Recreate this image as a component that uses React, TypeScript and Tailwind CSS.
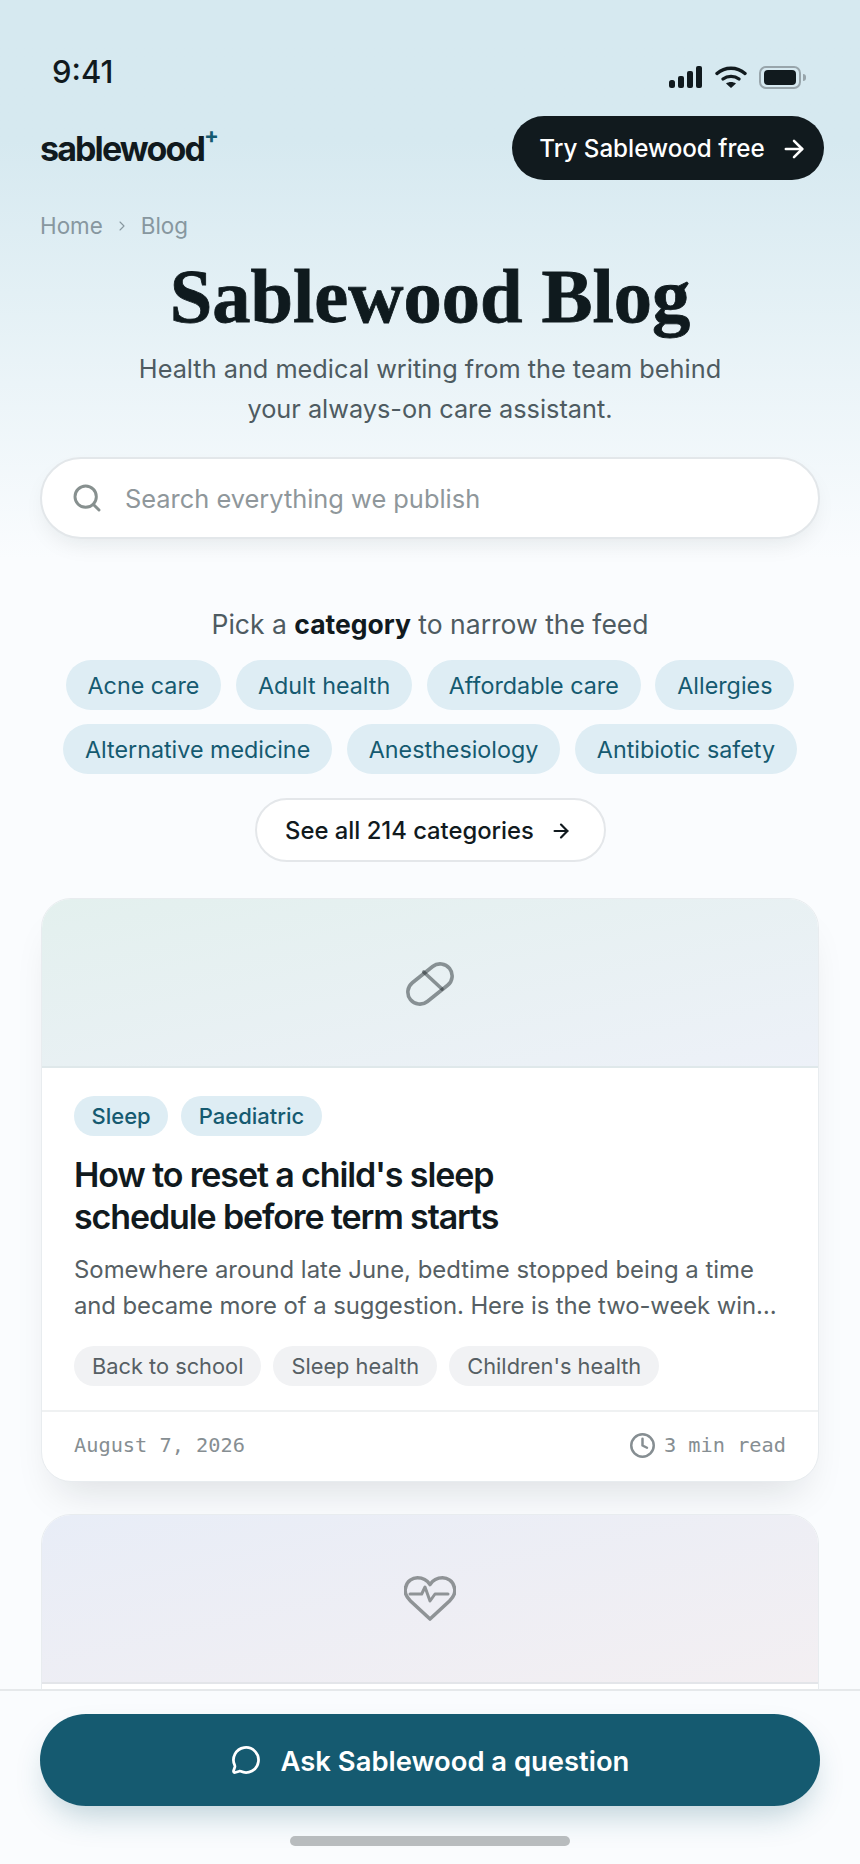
import React from 'react';
import { ArrowRight, ChevronRight, Clock, MessageCircle, Search } from 'lucide-react';

const categories = [
  ['Acne care', 'Adult health', 'Affordable care', 'Allergies'],
  ['Alternative medicine', 'Anesthesiology', 'Antibiotic safety'],
];

const StatusIcons = () => (
  <div className="flex items-center gap-[12px]">
    <svg width="34" height="22" viewBox="0 0 34 22" fill="#111a1e">
      <rect x="0" y="14" width="6" height="8" rx="2.5" />
      <rect x="9" y="10" width="6" height="12" rx="2" />
      <rect x="18" y="5" width="6" height="17" rx="2" />
      <rect x="27" y="0" width="6" height="22" rx="2" />
    </svg>
    <svg width="32" height="22" viewBox="0 0 32 22" fill="none" stroke="#111a1e" strokeWidth="3.4" strokeLinecap="round">
      <path d="M2 7.5C10 0.5 22 0.5 30 7.5" />
      <path d="M8 13C12.5 9.5 19.5 9.5 24 13" />
      <path d="M16 22l-5-4.6c3-2 7-2 10 0z" fill="#111a1e" stroke="none" />
    </svg>
    <div className="flex items-center gap-[2px]">
      <div className="flex h-[23px] w-[42px] items-center justify-center rounded-[7px] border-2 border-[#98a5ab]">
        <div className="h-[15px] w-[32px] rounded-[4px] bg-[#111a1e]" />
      </div>
      <div className="h-[7px] w-[3px] rounded-r-full bg-[#98a5ab]" />
    </div>
  </div>
);

// pill and heart are a bit wider than tall in the picture, so drawn by hand
const PillIcon = () => (
  <svg width="48" height="44" viewBox="0 0 48 44" fill="none" stroke="#111a1e" strokeOpacity="0.45" strokeWidth="3.6" strokeLinecap="round" className="mt-[3px]">
    <rect x="-1" y="10" width="50" height="24" rx="12" transform="rotate(-38.700 24 22)" />
    <path d="M17.700 10 36 27" />
  </svg>
);

const HeartIcon = () => (
  <svg width="52" height="45" viewBox="0 0 52 45" fill="none" stroke="#8f9396" strokeWidth="3.6" strokeLinejoin="round" strokeLinecap="round">
    <path d="M26 43 6.500 25C1.500 20 0 15.500 1.800 11 3 5 8.500 1.800 13.500 1.800 18.500 1.800 23 4 26 8.500 29 4 33.500 1.800 38.500 1.800 43.500 1.800 49 5 50.200 11 52 15.500 50.500 20 45.500 25Z" />
    <path d="M6 18h11.700L21 11l5 14 5-7h13" strokeWidth="3" />
  </svg>
);

const PostCard = () => (
  <article className="shrink-0 overflow-hidden rounded-[30px] border border-[#e8ecef] bg-white shadow-[0_24px_40px_-16px_rgba(17,26,30,0.13)]">
    <div className="flex h-[169px] items-center justify-center border-b-2 border-[#dfe8ea] bg-gradient-to-br from-[#e3f0ee] to-[#edf1f8]">
      <PillIcon />
    </div>
    <div className="pt-[28px] pr-[33px] pl-[32px]">
      <div className="flex gap-[13px]">
        <span className="flex h-[40px] items-center rounded-full bg-[#deedf4] px-[17.5px] pt-[1px] text-[22px] font-medium text-[#155a70]">Sleep</span>
        <span className="flex h-[40px] items-center rounded-full bg-[#deedf4] px-[17.5px] pt-[1px] text-[22px] font-medium text-[#155a70]">Paediatric</span>
      </div>
      <h2 className="mt-[18px] text-[34px] leading-[41.5px] font-semibold tracking-[-0.033em] text-[#111a1e]">
        How to reset a child's sleep
        <br />
        schedule before term starts
      </h2>
      <p className="mt-[15px] text-[23.9px] leading-[36px] whitespace-nowrap text-[#565f64]">
        Somewhere around late June, bedtime stopped being a time
        <br />
        <span className="tracking-[-0.08px]">and became more of a suggestion. Here is the two-week win…</span>
      </p>
      <div className="mt-[22px] flex gap-[12px]">
        {['Back to school', 'Sleep health', "Children's health"].map(tag => (
          <span key={tag} className="flex h-[40px] items-center rounded-full bg-[#f1f2f4] px-[18px] text-[21.8px] text-[#565f64]">{tag}</span>
        ))}
      </div>
    </div>
    <div className="mt-[24px] flex h-[71px] items-center justify-between border-t-2 border-[#eff1f2] pr-[32px] pb-[2px] pl-[32px] font-['DejaVu_Sans_Mono',monospace] text-[20.3px] text-[#868e92]">
      <span>August 7, 2026</span>
      <span className="flex items-center gap-[8px]">
        <Clock size={27} strokeWidth={2.2} />
        3 min read
      </span>
    </div>
  </article>
);

export default function App() {
  return (
    <div className="relative h-[1864px] w-[860px] overflow-hidden bg-[#fafcfe] font-['Inter',sans-serif] text-[#111a1e]">
      <div className="bg-gradient-to-b from-[#d6e9f0] from-[25%] to-[#fafcfe] pb-[20px]">
        {/* status bar */}
        <div className="flex h-[116px] items-center justify-between pt-[28px] pr-[54px] pl-[52px]">
          <span className="text-[31px] font-medium">9:41</span>
          <div className="mt-[10px]"><StatusIcons /></div>
        </div>
        {/* header */}
        <div className="flex h-[64px] items-center justify-between pr-[36px] pl-[40px]">
          <div className="flex items-start pt-[2px] text-[34px] leading-[44px] font-bold tracking-[-0.055em]">
            sablewood
            <span className="mt-[-3px] text-[22px] leading-[22px] font-bold text-[#155a70]">+</span>
          </div>
          <button className="flex h-[64px] w-[312px] items-center justify-center gap-[15px] rounded-full bg-[#111a1e] pt-[2px] pl-[11px] text-[24.2px] font-medium text-white">
            Try Sablewood free
            <ArrowRight size={28} strokeWidth={2.2} />
          </button>
        </div>
        {/* breadcrumb */}
        <div className="mt-[32px] flex items-center gap-[11px] px-[40px] text-[22.4px] leading-[28px] text-[#87979f]">
          <span>Home</span>
          <ChevronRight size={16} strokeWidth={1.6} />
          <span>Blog</span>
        </div>
        <h1 className="mt-[15px] text-center font-['Liberation_Serif',serif] text-[76.500px] leading-[84px] font-bold text-[#0f1a1e] [-webkit-text-stroke:0.8px_#0f1a1e]">Sablewood Blog</h1>
        <p className="mt-[10px] text-center text-[25.3px] leading-[40px] text-[#4e5b61]">
          Health and medical writing from the team behind
          <br />
          your always-on care assistant.
        </p>
        <div className="mx-[40px] mt-[28px] flex h-[82px] items-center gap-[22px] rounded-full border-2 border-[#e3e7ea] bg-white pl-[29px] text-[25.4px] text-[#8f979b] shadow-[0_10px_24px_-8px_rgba(17,26,30,0.10)]">
          <Search size={32} strokeWidth={2.2} className="text-[#87908f]" />
          <span className="pt-[2px]">Search everything we publish</span>
        </div>
      </div>
      <div className="mt-[47px] flex flex-col items-center">
        <p className="text-[26.5px] leading-[36px] text-[#4e5b61]">
          Pick a <b className="font-bold text-[#111a1e]">category</b> to narrow the feed
        </p>
        <div className="mt-[18px] flex flex-col gap-[14px]">
          {categories.map((row, i) => (
            <div key={i} className="flex justify-center gap-[14.5px]">
              {row.map(c => (
                <span key={c} className="flex h-[50px] items-center rounded-full bg-[#deedf4] px-[22px] pt-[2px] text-[23.3px] text-[#155a70]">{c}</span>
              ))}
            </div>
          ))}
        </div>
        <button className="mt-[24px] flex h-[64px] w-[351px] items-center justify-center gap-[16px] rounded-full border-2 border-[#e4e7ea] bg-white pt-[2px] pr-[3px] text-[23.8px] font-medium">
          See all 214 categories
          <ArrowRight size={22} strokeWidth={2.4} />
        </button>
      </div>
      <div className="mx-[41px] mt-[36px] flex flex-col gap-[32px]">
        <PostCard />
        <article className="overflow-hidden rounded-[30px] border border-[#e8ecef] bg-white">
          <div className="flex h-[169px] items-center justify-center border-b-2 border-[#e3e5e9] bg-gradient-to-br from-[#e8edf7] to-[#f3eff2]">
            <HeartIcon />
          </div>
          <div className="h-[100px]" />
        </article>
      </div>
      {/* bottom action bar */}
      <div className="absolute inset-x-0 bottom-0 h-[175px] border-t-2 border-[#e6e9eb] bg-[#fafcfe]">
        <button className="mx-[40px] mt-[23px] flex h-[92px] w-[780px] items-center justify-center gap-[20px] rounded-full bg-[#155a70] text-[27.4px] font-semibold text-white shadow-[0_16px_32px_-8px_rgba(21,90,112,0.28)]">
          <MessageCircle size={30} strokeWidth={2.2} />
          <span className="pt-[3px]">Ask Sablewood a question</span>
        </button>
        <div className="mx-auto mt-[30px] h-[10px] w-[280px] rounded-full bg-[#b8bcbe]" />
      </div>
    </div>
  );
}
